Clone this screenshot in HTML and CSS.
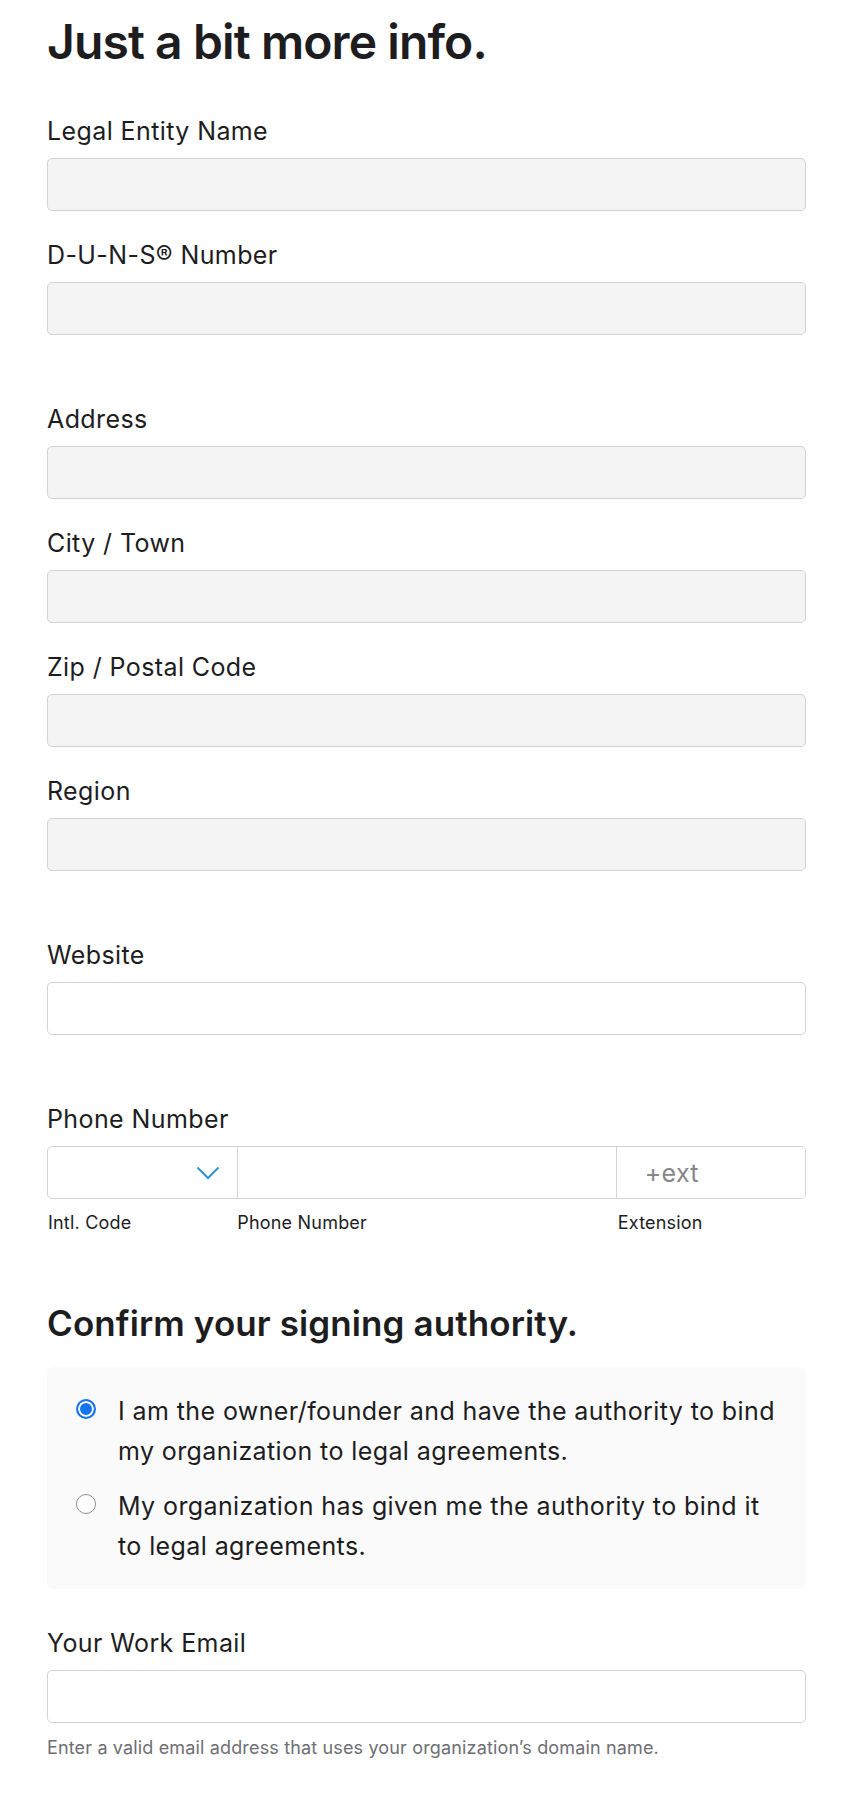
FILE: index.html
```html
<!DOCTYPE html>
<html lang="en">
<head>
<meta charset="UTF-8">
<meta name="viewport" content="width=device-width, initial-scale=1.0">
<title>Just a bit more info</title>
<link rel="stylesheet" href="styles.css">
</head>
<body>
<div class="page">
    <h1>Just a bit more info.</h1>

    <div class="form">
        <div class="section">
            <div class="field-group">
                <label for="entityName">Legal Entity Name</label>
                <input type="text" id="entityName" class="field locked" readonly>
            </div>
            <div class="field-group">
                <label for="duns">D-U-N-S® Number</label>
                <input type="text" id="duns" class="field locked" readonly>
            </div>
        </div>

        <div class="section">
            <div class="field-group">
                <label for="address">Address</label>
                <input type="text" id="address" class="field locked" readonly>
            </div>
            <div class="field-group">
                <label for="city">City / Town</label>
                <input type="text" id="city" class="field locked" readonly>
            </div>
            <div class="field-group">
                <label for="zip">Zip / Postal Code</label>
                <input type="text" id="zip" class="field locked" readonly>
            </div>
            <div class="field-group">
                <label for="region">Region</label>
                <input type="text" id="region" class="field locked" readonly>
            </div>
        </div>

        <div class="section">
            <div class="field-group">
                <label for="website">Website</label>
                <input type="text" id="website" class="field">
            </div>
        </div>

        <div class="section">
            <div class="field-group">
                <label for="phone">Phone Number</label>
                <div class="phone-row">
                    <div class="code-select">
                        <select id="intlCode" aria-label="Intl. Code">
                            <option value=""></option>
                        </select>
                        <svg class="chevron" width="24" height="14" viewBox="0 0 24 14">
                            <path d="M1.5 1.5 L12 12 L22.5 1.5" fill="none" stroke="#2b97d9" stroke-width="2"/>
                        </svg>
                    </div>
                    <input type="tel" id="phone" class="phone-cell">
                    <input type="text" id="ext" class="phone-cell ext" placeholder="+ext">
                </div>
                <div class="phone-hints">
                    <span>Intl. Code</span>
                    <span>Phone Number</span>
                    <span>Extension</span>
                </div>
            </div>
        </div>

        <div class="section authority">
            <h2>Confirm your signing authority.</h2>
            <div class="authority-box">
                <label class="option">
                    <input type="radio" name="authority" value="owner" checked>
                    <span>I am the owner/founder and have the authority to bind my organization to legal agreements.</span>
                </label>
                <label class="option">
                    <input type="radio" name="authority" value="delegated">
                    <span>My organization has given me the authority to bind it to legal agreements.</span>
                </label>
            </div>
            <div class="field-group">
                <label for="email">Your Work Email</label>
                <input type="email" id="email" class="field">
                <p class="hint">Enter a valid email address that uses your organization’s domain name.</p>
            </div>
        </div>
    </div>
</div>
</body>
</html>
```

FILE: styles.css
```css
body {
    margin: 0;
    background: #fff;
    color: #1d1d1f;
    font-family: Inter, "Noto Sans", sans-serif;
}

.page {
    padding: 12px 46px 40px 47px;
}

h1 {
    margin: 0 0 45px;
    font-size: 48px;
    line-height: 60px;
    font-weight: 600;
    letter-spacing: -0.9px;
}

h2 {
    margin: 0 0 23px;
    font-size: 35px;
    line-height: 41px;
    font-weight: 600;
    letter-spacing: 0.1px;
}

.form {
    display: flex;
    flex-direction: column;
    gap: 70px;
}

.section {
    display: flex;
    flex-direction: column;
    gap: 30px;
}

.field-group label {
    display: block;
    margin-bottom: 12px;
    font-size: 25px;
    line-height: 29px;
    letter-spacing: 0.4px;
}

.field {
    display: block;
    box-sizing: border-box;
    width: 100%;
    height: 53px;
    padding: 0 16px;
    border: 1px solid #d2d2d7;
    border-radius: 5px;
    background: #fff;
    font: inherit;
    font-size: 24px;
    color: #1d1d1f;
}

.field.locked {
    background: #f4f4f4;
}

/* phone number: code / number / extension in one box */
.phone-row {
    display: grid;
    grid-template-columns: 1fr 2fr 1fr;
    height: 53px;
    box-sizing: border-box;
    border: 1px solid #d2d2d7;
    border-radius: 5px;
    overflow: hidden;
}

.code-select {
    position: relative;
}

.code-select select {
    appearance: none;
    -webkit-appearance: none;
    width: 100%;
    height: 100%;
    border: none;
    background: transparent;
    font: inherit;
}

.chevron {
    position: absolute;
    right: 17px;
    top: 19px;
    pointer-events: none;
}

.phone-cell {
    box-sizing: border-box;
    width: 100%;
    height: 100%;
    border: none;
    border-left: 1px solid #d2d2d7;
    padding: 0 16px;
    font: inherit;
    font-size: 25px;
    letter-spacing: 0.3px;
    color: #1d1d1f;
    background: #fff;
}

.phone-cell.ext {
    padding-left: 28px;
}

.phone-cell::placeholder {
    color: #86868b;
}

.phone-hints {
    display: grid;
    grid-template-columns: 1fr 2fr 1fr;
    padding: 0 1px;
    margin-top: 14px;
    font-size: 18px;
    line-height: 20px;
    letter-spacing: 0.2px;
}

.phone-hints span:last-child {
    padding-left: 2px;
}

.authority {
    gap: 0;
}

.authority-box {
    display: flex;
    flex-direction: column;
    gap: 15px;
    margin-bottom: 40px;
    padding: 24px 24px 23px 29px;
    background: #fafafa;
    border-radius: 6px;
}

.option {
    display: flex;
    align-items: flex-start;
    gap: 22px;
    font-size: 25px;
    line-height: 40px;
    letter-spacing: 0.4px;
    cursor: pointer;
}

.option input {
    appearance: none;
    -webkit-appearance: none;
    flex: none;
    box-sizing: border-box;
    width: 20px;
    height: 20px;
    margin: 8px 0 0;
    border: 1px solid #8e8e93;
    border-radius: 50%;
    background: #fff;
}

.option input:checked {
    border: 2px solid #1473f0;
    box-shadow: inset 0 0 0 2px #fff;
    background: #1473f0;
}

.hint {
    margin: 14px 0 0;
    font-size: 18px;
    line-height: 21px;
    letter-spacing: 0.15px;
    color: #6e6e73;
}
```
